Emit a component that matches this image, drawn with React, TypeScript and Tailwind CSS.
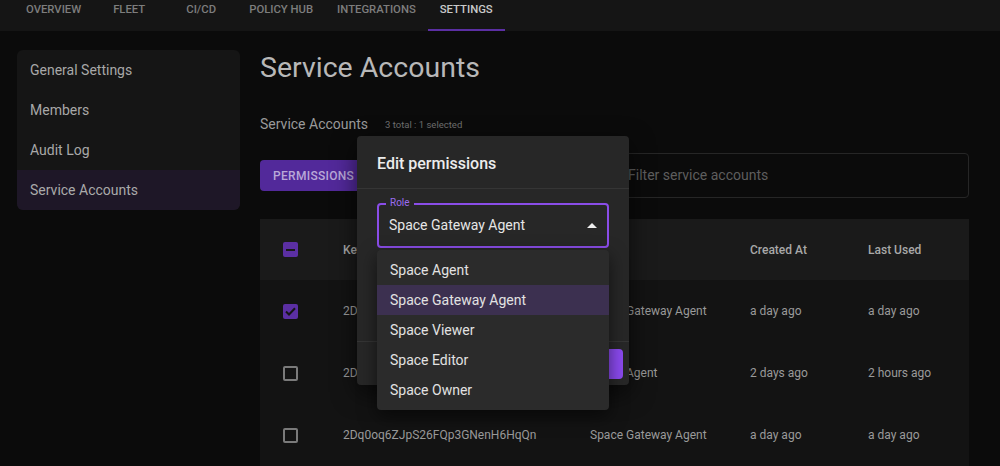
import React from "react";

const tabs = ["OVERVIEW", "FLEET", "CI/CD", "POLICY HUB", "INTEGRATIONS", "SETTINGS"];
const side = ["General Settings", "Members", "Audit Log", "Service Accounts"];
const rows = [
  { key: "2DpXk3sT9mQe4VhR7bNcW1yLzAf", role: "Space Gateway Agent", created: "a day ago", last: "a day ago", checked: true },
  { key: "2DpVn8rJ5qKt2WgH6cMdX3uPsEa", role: "Space Agent", created: "2 days ago", last: "2 hours ago", checked: false },
  { key: "2Dq0oq6ZJpS26FQp3GNenH6HqQn", role: "Space Gateway Agent", created: "a day ago", last: "a day ago", checked: false },
];
const options = ["Space Agent", "Space Gateway Agent", "Space Viewer", "Space Editor", "Space Owner"];

function Check({ state }: { state: "on" | "off" | "ind" }) {
  if (state === "off")
    return <div className="w-[15px] h-[15px] rounded-[2px] border-2 border-[#7a7a7a]" />;
  return (
    <div className="w-[15px] h-[15px] rounded-[2px] bg-[#5b2fa3] flex items-center justify-center">
      {state === "ind" ? (
        <div className="w-[9px] h-[2px] bg-[#1a1a1a]" />
      ) : (
        <svg width="11" height="9" viewBox="0 0 11 9">
          <path d="M1 4.5 L4 7.5 L10 1.2" stroke="#161616" strokeWidth="2" fill="none" />
        </svg>
      )}
    </div>
  );
}

export default function App() {
  return (
    <div
      className="relative w-[1000px] h-[466px] overflow-hidden bg-[#0b0b0b] text-[#b0b0b0]"
      style={{ fontFamily: "Roboto, 'Noto Sans', sans-serif" }}
    >
      {/* top nav */}
      <div className="h-[31px] bg-[#151515] flex pl-[14px]">
        {tabs.map((t) => (
          <div
            key={t}
            className={`min-w-[72px] px-3 h-full flex justify-center pt-[3px] text-[11.3px] leading-[14px] font-medium ${
              t === "SETTINGS" ? "text-[#c9c9c9] border-b-2 border-[#5b2fa3]" : "text-[#7d7d7d]"
            }`}
          >
            {t}
          </div>
        ))}
      </div>

      <div className="flex pt-[19px]">
        {/* sidebar */}
        <div className="ml-[17px] w-[223px] self-start bg-[#151515] rounded-md overflow-hidden">
          {side.map((s) => (
            <div
              key={s}
              className={`h-[40px] flex items-center pl-[13px] text-[14px] ${
                s === "Service Accounts" ? "bg-[#1e1727] text-[#aaaaaa]" : "text-[#a8a8a8]"
              }`}
            >
              {s}
            </div>
          ))}
        </div>

        {/* main */}
        <div className="ml-[20px] w-[709px]">
          <div className="text-[28.5px] leading-[36px] text-[#b8b8b8] font-normal">Service Accounts</div>
          <div className="mt-[28px] flex items-center h-[20px]">
            <span className="text-[14px] text-[#9a9a9a]">Service Accounts</span>
            <span className="ml-[17px] text-[9.5px] text-[#707070] mt-[2px]">3 total : 1 selected</span>
          </div>
          <div className="mt-[19px] flex items-center h-[45px]">
            <div className="h-[31px] w-[104px] bg-[#52299a] rounded-[4px] flex items-center pl-[13px] text-[12px] font-medium text-[#b9a8d8] tracking-[0.3px]">
              PERMISSIONS
            </div>
            <div className="ml-auto w-[357px] h-[45px] border border-[#262626] rounded-[4px] flex items-center pl-[15px] text-[14px] text-[#5e5e5e]">
              Filter service accounts
            </div>
          </div>

          {/* table */}
          <div className="mt-[21px] bg-[#131313]">
            <div className="h-[61px] bg-[#1a1a1a] flex items-center text-[12px] font-medium text-[#a8a8a8]">
              <div className="w-[83px] pl-[23px]">
                <Check state="ind" />
              </div>
              <div className="w-[247px]">Key</div>
              <div className="w-[160px]">Role</div>
              <div className="w-[118px]">Created At</div>
              <div>Last Used</div>
            </div>
            {rows.map((r) => (
              <div key={r.key} className="h-[62px] flex items-center text-[12px] text-[#9a9a9a]">
                <div className="w-[83px] pl-[23px]">
                  <Check state={r.checked ? "on" : "off"} />
                </div>
                <div className="w-[247px]">{r.key}</div>
                <div className="w-[160px]">{r.role}</div>
                <div className="w-[118px]">{r.created}</div>
                <div>{r.last}</div>
              </div>
            ))}
          </div>
        </div>
      </div>

      {/* dialog */}
      <div className="absolute left-[357px] top-[136px] w-[272px] h-[249px] bg-[#272727] rounded-[4px] shadow-[0_8px_24px_rgba(0,0,0,0.6)] flex flex-col">
        <div className="h-[53px] flex items-center pt-[3px] px-5 text-[16px] font-medium text-[#ececec] border-b border-[#353535]">
          Edit permissions
        </div>
        <div className="px-5 pt-[14px] flex-1">
          <div className="relative h-[45px] border-2 border-[#8a4de8] rounded-[4px] flex items-center pl-[10px] pr-[10px]">
            <span className="absolute -top-[8px] left-[7px] px-[4px] bg-[#272727] text-[10px] leading-[12px] text-[#9b6cf0]">
              Role
            </span>
            <span className="text-[14px] text-[#e6e6e6]">Space Gateway Agent</span>
            <svg className="ml-auto" width="10" height="5" viewBox="0 0 10 5">
              <path d="M0 5 L5 0 L10 5 Z" fill="#eeeeee" />
            </svg>
          </div>
        </div>
        <div className="h-[44px] border-t border-[#353535] flex items-center justify-end pr-[6px]">
          <div className="h-[30px] w-[60px] bg-[#8c4af0] rounded-[4px]" />
        </div>
      </div>

      {/* dropdown menu */}
      <div className="absolute left-[377px] top-[250px] w-[232px] h-[160px] bg-[#2b2b2b] rounded-[4px] shadow-[0_6px_18px_rgba(0,0,0,0.55)] py-[5px]">
        {options.map((o) => (
          <div
            key={o}
            className={`h-[30px] flex items-center pl-[13px] text-[14px] text-[#e2e2e2] ${
              o === "Space Gateway Agent" ? "bg-[#3c3050]" : ""
            }`}
          >
            {o}
          </div>
        ))}
      </div>
    </div>
  );
}
